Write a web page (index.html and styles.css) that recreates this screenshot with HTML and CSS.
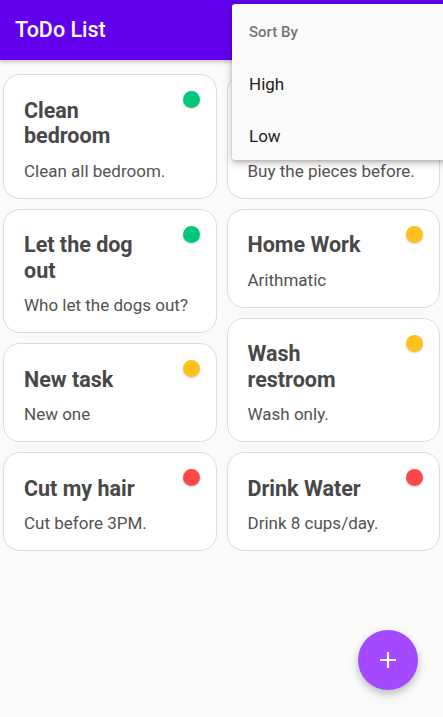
FILE: index.html
```html
<!DOCTYPE html>
<html>
<head>
<meta charset="utf-8">
<link rel="stylesheet" href="styles.css">
</head>
<body>
<header class="appbar"><h1 class="appbar-title">ToDo List</h1></header>
<main class="grid">
  <div class="col">
    <div class="card">
      <div class="card-head"><h2 class="card-title">Clean bedroom</h2><span class="dot green"></span></div>
      <p class="card-desc">Clean all bedroom.</p>
    </div>
    <div class="card">
      <div class="card-head"><h2 class="card-title">Let the dog out</h2><span class="dot green"></span></div>
      <p class="card-desc">Who let the dogs out?</p>
    </div>
    <div class="card">
      <div class="card-head"><h2 class="card-title">New task</h2><span class="dot yellow"></span></div>
      <p class="card-desc">New one</p>
    </div>
    <div class="card">
      <div class="card-head"><h2 class="card-title">Cut my hair</h2><span class="dot red"></span></div>
      <p class="card-desc">Cut before 3PM.</p>
    </div>
  </div>
  <div class="col">
    <div class="card">
      <div class="card-head"><h2 class="card-title">Assemble puzzle</h2><span class="dot green"></span></div>
      <p class="card-desc">Buy the pieces before.</p>
    </div>
    <div class="card">
      <div class="card-head"><h2 class="card-title">Home Work</h2><span class="dot yellow"></span></div>
      <p class="card-desc">Arithmatic</p>
    </div>
    <div class="card">
      <div class="card-head"><h2 class="card-title">Wash restroom</h2><span class="dot yellow"></span></div>
      <p class="card-desc">Wash only.</p>
    </div>
    <div class="card">
      <div class="card-head"><h2 class="card-title">Drink Water</h2><span class="dot red"></span></div>
      <p class="card-desc">Drink 8 cups/day.</p>
    </div>
  </div>
</main>
<div class="menu">
  <div class="menu-header">Sort By</div>
  <div class="menu-item">High</div>
  <div class="menu-item">Low</div>
</div>
<button class="fab" aria-label="Add">
  <svg width="20" height="20" viewBox="0 0 20 20"><path d="M10 2v16M2 10h16" stroke="#fff" stroke-width="2.2" fill="none"/></svg>
</button>
</body>
</html>
```
FILE: styles.css
```css
* { box-sizing: border-box; }
html, body { margin: 0; padding: 0; }
body {
  width: 443px;
  height: 717px;
  overflow: hidden;
  background: #fafafa;
  font-family: Roboto, "Noto Sans", sans-serif;
  position: relative;
}
.appbar {
  height: 60px;
  background: #6200ee;
  display: flex;
  align-items: center;
  padding-left: 15px;
  box-shadow: 0 2px 4px rgba(0,0,0,0.22);
  position: relative;
  z-index: 1;
}
.appbar-title {
  margin: 0;
  color: #fff;
  font-size: 21.5px;
  font-weight: 500;
  line-height: 25px;
  padding-bottom: 1px;
}
.grid {
  display: grid;
  grid-template-columns: 1fr 1fr;
  column-gap: 10px;
  padding: 14px 3px 0 3px;
  align-items: start;
}
.col {
  display: flex;
  flex-direction: column;
  gap: 10px;
}
.card {
  background: #fff;
  border: 1px solid #dcdcdc;
  border-radius: 17px;
  padding: 22.5px 16px 17px 20px;
  position: relative;
}
.card-head {
  display: flex;
  align-items: flex-start;
}
.card-title {
  margin: 0;
  flex: 1;
  max-width: 132px;
  font-size: 21.5px;
  font-weight: 700;
  line-height: 25.5px;
  color: #484848;
}
.dot {
  position: absolute;
  top: 16px;
  right: 16px;
  width: 17px;
  height: 17px;
  border-radius: 50%;
  box-shadow: 0 1px 2px rgba(0,0,0,0.2);
}
.green { background: #00c77c; }
.yellow { background: #ffc01b; }
.red { background: #ff4747; }
.card-desc {
  margin: 12px 0 0 0;
  font-size: 17px;
  line-height: 20px;
  color: #525252;
}
.menu {
  position: absolute;
  top: 4px;
  left: 232px;
  width: 216px;
  height: 156px;
  overflow: hidden;
  background: #fafafa;
  border-radius: 3px;
  box-shadow: 0 3px 8px rgba(0,0,0,0.25), 0 1px 3px rgba(0,0,0,0.15);
  z-index: 5;
  padding-top: 12px;
}
.menu-header {
  height: 42px;
  padding-left: 17px;
  font-size: 15px;
  font-weight: 500;
  color: #757575;
  line-height: 32px;
}
.menu-item {
  height: 52px;
  padding-left: 17px;
  font-size: 17px;
  color: #222;
  line-height: 52px;
}
.fab {
  position: absolute;
  left: 358px;
  top: 630px;
  width: 60px;
  height: 60px;
  border-radius: 50%;
  border: none;
  background: #a349ff;
  display: flex;
  align-items: center;
  justify-content: center;
  box-shadow: 0 4px 8px rgba(0,0,0,0.25);
  padding: 0;
}
```
